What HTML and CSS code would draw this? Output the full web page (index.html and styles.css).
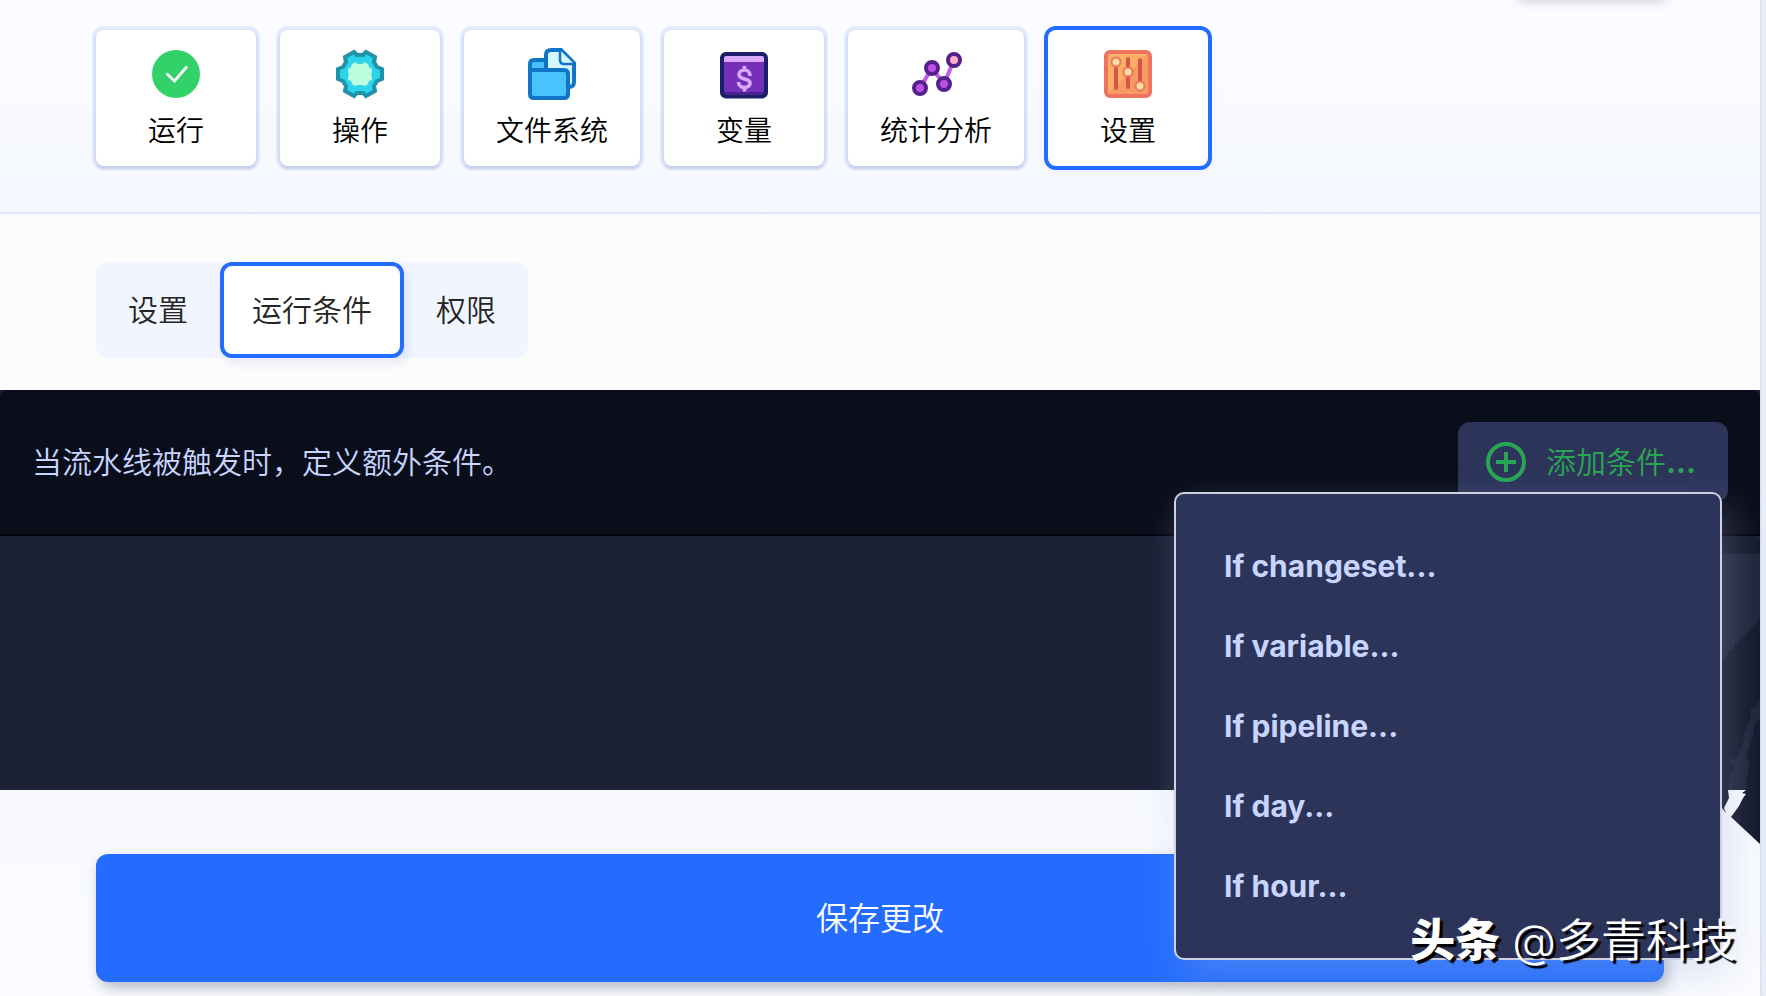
FILE: index.html
```html
<!DOCTYPE html>
<html lang="zh-CN">
<head>
<meta charset="utf-8">
<title>运行条件</title>
<link rel="stylesheet" href="styles.css">
</head>
<body>
<div class="page">
  <div class="floating-edge"></div>
  <nav class="cards">
    <button class="card" type="button">
      <svg class="card-icon" viewBox="0 0 48 48"><circle cx="24" cy="24" r="24" fill="#32d169"/><path d="M14.500 23.500l8 7.500 12.500-14.500" fill="none" stroke="#fff" stroke-width="2.800"/></svg>
      <span>运行</span>
    </button>
    <button class="card" type="button">
      <svg class="card-icon" viewBox="0 0 48 48"><path d="M18 2l3 3h6l3-3 9 5-1 5 3 5 5 2v10l-5 2-3 5 1 5-9 5-3-3h-6l-3 3-9-5 1-5-3-5-5-2V19l5-2 3-5-1-5z" fill="#2ad4ea" stroke="#2093a8" stroke-width="4"/><path d="M19 12l3 2h4l3-2 3 2 1 3 3 2v3l-1 2 1 3v3l-3 1-1 3-3 2-3-1h-4l-3 1-3-2-1-3-3-1v-3l1-3-1-2v-3l3-2 1-3z" fill="#bbffdf"/></svg>
      <span>操作</span>
    </button>
    <button class="card" type="button">
      <svg class="card-icon" viewBox="0 0 48 48"><path d="M18 25V5q0-5 5-5h10l13 13v19q0 5-5 5H24z" fill="#d4f8ff" stroke="#1075c9" stroke-width="4"/><path d="M32 0v10q0 4 4 4h10" fill="#d4f8ff" stroke="#1075c9" stroke-width="2.500"/><path d="M2 22v-8q0-4 4-4h12v12" fill="#48bfff" stroke="#1075c9" stroke-width="4"/><path d="M2 20h34q4 0 4 4v20q0 4-4 4H6q-4 0-4-4z" fill="#48c3ff" stroke="#1075c9" stroke-width="4"/></svg>
      <span>文件系统</span>
    </button>
    <button class="card" type="button">
      <svg class="card-icon" viewBox="0 0 48 48"><rect x="2" y="4" width="44" height="42.500" rx="4" fill="#7430b7"/><path d="M4 6h40v6H4z" fill="#d9a8ff"/><path d="M4 43h40" stroke="#4b208f" stroke-width="2"/><rect x="2" y="4" width="44" height="42.500" rx="4" fill="none" stroke="#1c1e68" stroke-width="4"/><path d="M24.500 16v4m0 17v4.500M30 26c0-4-2.500-6-5.500-6S19 22 19 24.500c0 6 11 3 11 8.500 0 3-2.500 4.500-5.500 4.500s-6-2-6-5.500" fill="none" stroke="#d9a8ff" stroke-width="3.600"/></svg>
      <span>变量</span>
    </button>
    <button class="card" type="button">
      <svg class="card-icon" viewBox="0 0 48 48"><path d="M8 38l12-20 12 16L42 10" fill="none" stroke="#c45ae6" stroke-width="4"/><g fill="#c050df" stroke="#53218a" stroke-width="4"><circle cx="8" cy="38" r="6"/><circle cx="20" cy="18" r="6"/><circle cx="32" cy="34" r="6"/><circle cx="42" cy="10" r="6" fill="#ffafc8"/></g></svg>
      <span>统计分析</span>
    </button>
    <button class="card card-active" type="button" aria-current="page">
      <svg class="card-icon" viewBox="0 0 48 48"><rect x="2" y="2" width="44" height="44" rx="4" fill="#ffae66"/><path d="M4 44L44 4v40z" fill="#f79b63"/><rect x="2" y="2" width="44" height="44" rx="4" fill="none" stroke="#ef735f" stroke-width="4"/><path d="M12 12v26M24 9v28M36 10v26" stroke="#d25749" stroke-width="4" stroke-linecap="round"/><g fill="#ffe0a3" stroke="#ef735f" stroke-width="2"><circle cx="12" cy="12" r="4.500"/><circle cx="24" cy="22" r="4.500"/><circle cx="36" cy="36" r="4.500"/></g></svg>
      <span>设置</span>
    </button>
  </nav>
  <div class="tabs-bar">
    <div class="tabs" role="tablist">
      <button class="tab" type="button" role="tab">设置</button>
      <button class="tab tab-active" type="button" role="tab" aria-selected="true">运行条件</button>
      <button class="tab" type="button" role="tab">权限</button>
    </div>
  </div>
  <section class="conditions">
    <header class="conditions-head">
      <p class="conditions-text">当流水线被触发时，定义额外条件。</p>
      <div class="add-wrap">
        <button class="add" type="button" aria-haspopup="menu" aria-expanded="true">
          <svg class="add-icon" viewBox="0 0 40 40"><path d="M20 10v20M10 20h20" stroke="#29a653" stroke-width="4"/><circle cx="20" cy="20" r="18" fill="none" stroke="#29a653" stroke-width="4"/></svg>
          <span>添加条件<span class="dots">...</span></span>
        </button>
        <div class="menu" role="menu">
          <button class="menu-item" type="button" role="menuitem">If changeset...</button>
          <button class="menu-item" type="button" role="menuitem">If variable...</button>
          <button class="menu-item" type="button" role="menuitem">If pipeline...</button>
          <button class="menu-item" type="button" role="menuitem">If day...</button>
          <button class="menu-item" type="button" role="menuitem">If hour...</button>
        </div>
      </div>
    </header>
    <div class="conditions-body">
      <svg class="art" viewBox="0 0 38 308"><path d="M0 0h30q8 0 8 8v10H0z" fill="#15192c"/><path d="M0 18h38v66L0 124z" fill="#1f253a"/><path d="M38 84v224L9 281l8-11 4-8 3-4-4-1 4-3H6l1 8-3 6-2 4 2 5-4-5V124l6-6 1-4 5-1 1-5z" fill="#14182b"/><path d="M38 164l-3 4-1 4-6-1 1 10-4 10-4 10 1 4-4 9-3 8-8 2 6 5-2 6-3 6-2 13h18v-10l2-7 2-11-4-5 3-10 4-10 2-15 5-2z" fill="#1e243a"/></svg>
    </div>
  </section>
  <footer class="footer"><button class="save" type="button">保存更改</button></footer>
</div>
<div class="watermark"><b class="watermark-brand">头条</b><span><span class="watermark-at">@</span>多青科技</span></div>
</body>
</html>
```
FILE: styles.css
```css
* { box-sizing: border-box; }
body {
  margin: 0;
  min-height: 100vh;
  overflow: hidden;
  position: relative;
  padding-right: 6px;
  background: #e8edf8;
  font-family: Inter, "Noto Sans CJK SC", sans-serif;
  font-weight: 350;
}
button { margin: 0; border: 0; font: inherit; cursor: pointer; }
.page {
  position: relative;
  min-height: 100vh;
  background: #fafbff;
  box-shadow: 0 0 2px 1px #d3dcec;
}
.floating-edge {
  position: absolute;
  top: -22px;
  right: 92px;
  width: 152px;
  height: 20px;
  border-radius: 12px;
  box-shadow: 0 2px 12px rgba(50, 60, 90, .3);
}
.cards {
  display: flex;
  gap: 24px;
  padding: 30px 96px 46px;
  border-bottom: 2px solid #dfe6f5;
  background: linear-gradient(#fbfcff, #f5f8ff);
}
.card {
  display: flex;
  flex-direction: column;
  align-items: center;
  gap: 13px;
  min-width: 160px;
  padding: 20px 32px 15px;
  border-radius: 8px;
  background: #fff;
  box-shadow: 0 2px 4px rgba(50, 70, 120, .25), 0 0 0 4px #e4ecff;
  color: #000;
  font-size: 28px;
  line-height: 40px;
}
.card-active { box-shadow: 0 0 0 4px #236cff, 0 4px 12px rgba(80, 100, 150, .1); }
.card-icon { width: 48px; height: 48px; overflow: visible; }
.tabs-bar { padding: 48px 96px 32px; background: #fcfcfc; }
.tabs { display: inline-flex; vertical-align: top; border-radius: 12px; background: #f1f5ff; }
.tab {
  padding: 24px 28px;
  border: 4px solid transparent;
  border-radius: 12px;
  background: transparent;
  color: #252525;
  font-size: 30px;
  line-height: 40px;
}
.tab-active { border-color: #236cff; background: #fff; box-shadow: 4px 6px 10px rgba(80, 110, 200, .12); }
.conditions { background: #1b2035; }
.conditions-head {
  display: flex;
  justify-content: space-between;
  align-items: center;
  padding: 32px;
  border-bottom: 2px solid #02030a;
  border-radius: 8px 8px 0 0;
  background: #0a0e1b;
}
.conditions-text { margin: 0; color: #c8d5ff; font-size: 30px; line-height: 40px; }
.add-wrap { position: relative; }
.add {
  display: flex;
  align-items: center;
  gap: 20px;
  padding: 20px 32px 20px 28px;
  border-radius: 12px;
  background: #2d3459;
  color: #29a653;
  font-size: 30px;
  line-height: 40px;
}
.add-icon { width: 40px; height: 40px; }
.dots { font-weight: 650; }
.menu {
  position: absolute;
  z-index: 2;
  top: 70px;
  right: 6px;
  width: 548px;
  padding: 32px 0;
  border: 2px solid #ccd2e2;
  border-radius: 10px;
  background: #2d3459;
  box-shadow: 8px 16px 40px rgba(160, 178, 215, .3);
}
.menu-item {
  display: block;
  width: 100%;
  padding: 20px 48px;
  background: transparent;
  color: #c8d5ff;
  font-size: 30px;
  font-weight: 650;
  line-height: 40px;
  text-align: left;
}
.conditions-body { position: relative; height: 254px; }
.art { position: absolute; top: 0; right: 0; width: 38px; height: 308px; }
.footer { padding: 64px 96px 14px; background: linear-gradient(#f7f9ff, #fbfcff); }
.save {
  display: block;
  width: 100%;
  padding: 41px 40px 39px;
  border-radius: 12px;
  background: #236cff;
  box-shadow: 4px 6px 14px rgba(50, 60, 90, .35);
  color: #fff;
  font-size: 32px;
  line-height: 48px;
}
.watermark {
  position: absolute;
  z-index: 3;
  right: 30px;
  bottom: 23px;
  display: flex;
  gap: 12px;
  color: #fff;
  font-size: 45px;
  line-height: 64px;
  font-family: "Noto Sans CJK SC", sans-serif;
  text-shadow: 3px 3px 1px #000;
}
.watermark-brand { font-weight: 900; }
.watermark-at { font-family: Inter, sans-serif; }
```
